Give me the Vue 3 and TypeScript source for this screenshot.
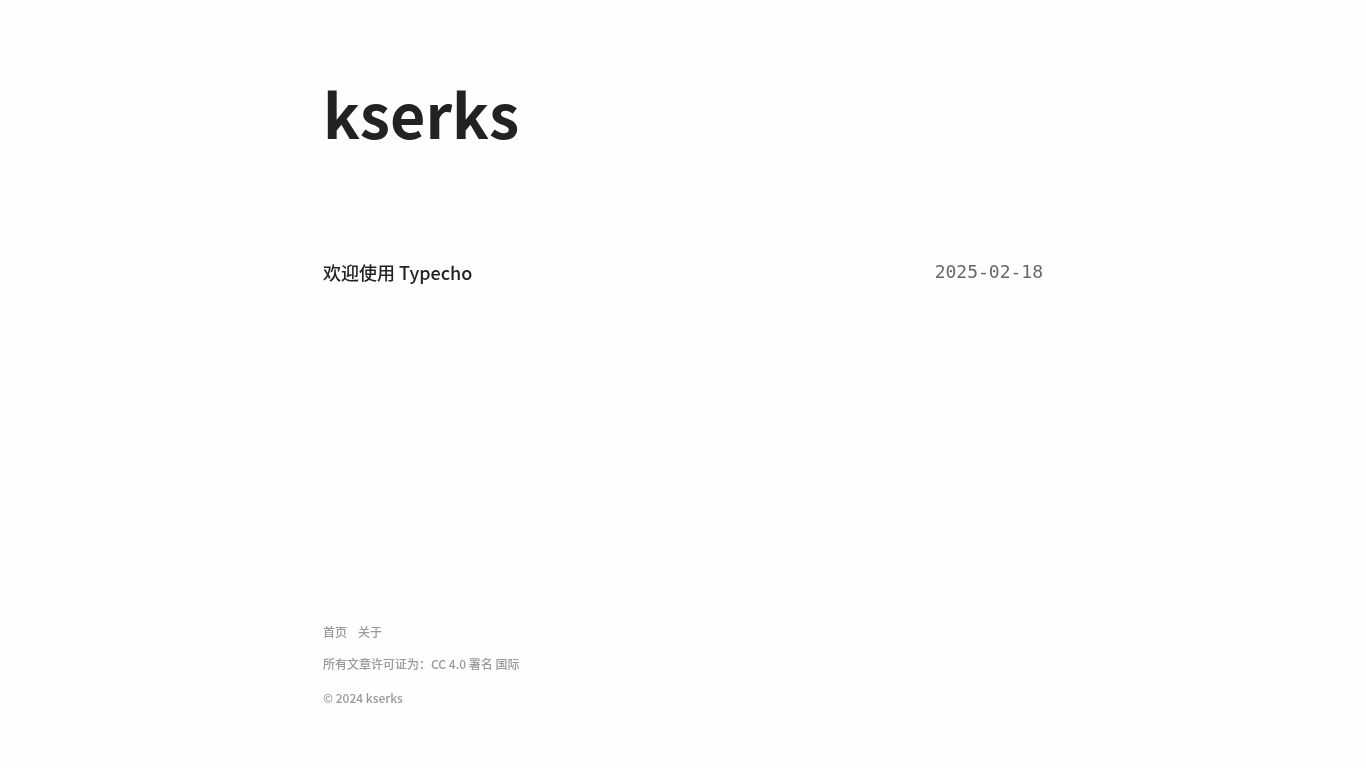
<script setup lang="ts">
interface Post {
  title: string
  date: string
}

const posts: Post[] = [{ title: '欢迎使用 Typecho', date: '2025-02-18' }]
const links: string[] = ['首页', '关于']
</script>

<template>
  <div class="page">
    <header class="header">
      <h1 class="title"><a href="#">kserks</a></h1>
    </header>
    <main class="posts">
      <article v-for="post in posts" :key="post.title" class="post">
        <a class="post-title" href="#">{{ post.title }}</a>
        <time class="post-date" :datetime="post.date">{{ post.date }}</time>
      </article>
    </main>
    <footer class="footer">
      <nav class="links">
        <a v-for="link in links" :key="link" href="#">{{ link }}</a>
      </nav>
      <p>所有文章许可证为：<a href="#">CC 4.0 署名 国际</a></p>
      <p>© 2024 kserks</p>
    </footer>
  </div>
</template>

<style>
body {
  background: #fefefe;
}
</style>

<style scoped>
.page {
  box-sizing: border-box;
  display: flex;
  flex-direction: column;
  max-width: 720px;
  min-height: 100vh;
  margin: 0 auto;
  padding: 64px 0 61px;
  font-family: "Noto Sans CJK SC", sans-serif;
  font-weight: 500;
  color: #222;
  will-change: transform;
}

a {
  color: inherit;
  text-decoration: none;
}

.title {
  margin: 0;
  font-size: 61px;
  line-height: 98px;
  font-weight: 700;
}

.posts {
  flex: 1;
  padding-top: 94px;
}

.post {
  display: flex;
  justify-content: space-between;
  font-size: 18px;
  line-height: 32px;
}

.post-date {
  font-family: "DejaVu Sans Mono", monospace;
  font-weight: 400;
  color: #666;
}

.footer {
  font-size: 12px;
  line-height: 18px;
  color: #999;
}

.links {
  display: flex;
  gap: 11px;
}

.footer p {
  margin: 14px 0 0;
}

.footer p + p {
  margin-top: 16px;
}
</style>
